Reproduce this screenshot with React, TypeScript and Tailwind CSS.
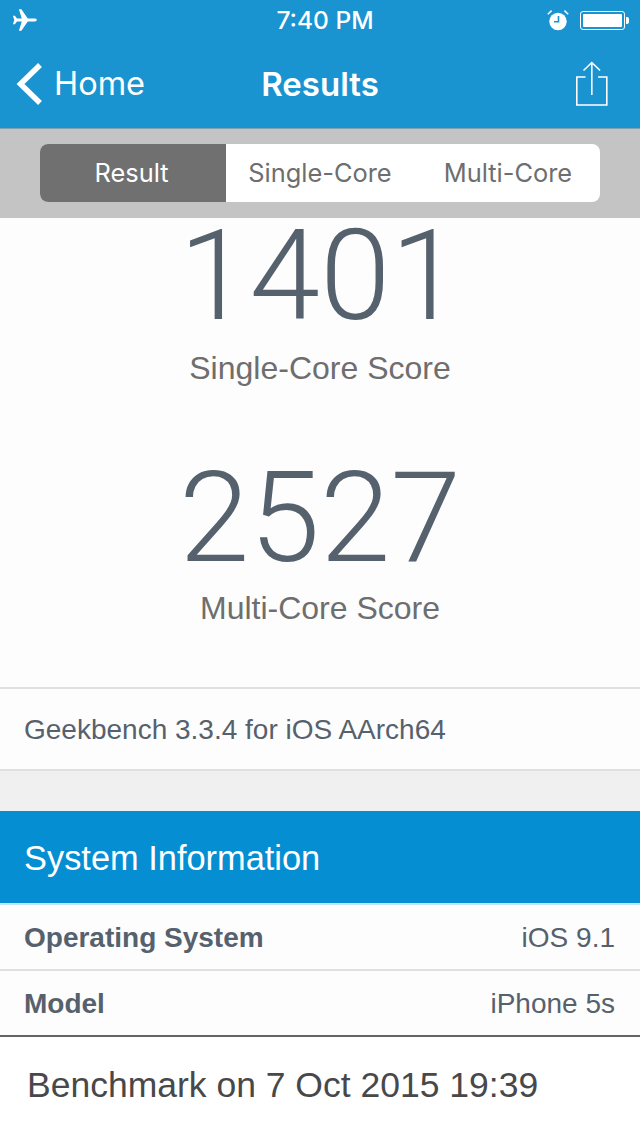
function AirplaneIcon() {
  return (
    <svg width="26" height="24" viewBox="0 0 26 24" fill="white">
      <path d="M24.8 11.8c0-.9-1.2-1.4-2.6-1.4h-6.4L9.4 1.2H6.9l2.9 9.2H5L2.9 7.8H.9L2.3 12 .9 16.2h2L5 13.6h4.8L6.9 22.8h2.5l6.4-9.2h6.4c1.4 0 2.6-.9 2.6-1.8z" />
    </svg>
  );
}

function AlarmIcon() {
  return (
    <svg width="22" height="22" viewBox="0 0 22 22">
      <circle cx="11" cy="12.5" r="8.7" fill="white" />
      <path d="M11.5 7v5.8H7" fill="none" stroke="#1a93d1" strokeWidth="1.6" />
      <path d="M.8 5.2 4.6 1.6M21.2 5.2 17.4 1.6" fill="none" stroke="white" strokeWidth="1.5" />
    </svg>
  );
}

function BatteryIcon() {
  return (
    <div className="flex items-center">
      <div className="w-[45px] h-[19px] rounded-[3px] border border-white p-[2px]">
        <div className="w-full h-full bg-white rounded-[1px]" />
      </div>
      <div className="w-[3px] h-[7px] ml-[1px] bg-white rounded-r-[2px]" />
    </div>
  );
}

function ShareIcon() {
  return (
    <svg width="34" height="46" viewBox="0 0 34 46" fill="none" stroke="white" strokeWidth="1.6">
      <path d="M10.5 16H1.8v28h30V16h-8.7" />
      <path d="M16.8 34V2M8.5 9.5l8.3-8 8.3 8" />
    </svg>
  );
}

function InfoRow({ label, value, last }: { label: string; value: string; last?: boolean }) {
  return (
    <div
      className={`h-[66px] flex items-center justify-between pl-6 pr-[25px] pt-[2px] bg-[#fdfdfd] border-b-2 text-[28px] text-[#56616e] shrink-0 ${
        last ? "border-[#646464]" : "border-[#e0e0e0]"
      }`}
    >
      <span className="font-bold">{label}</span>
      <span>{value}</span>
    </div>
  );
}

const scoreClass =
  "font-['Roboto',sans-serif] font-light text-[127px] leading-[120px] text-[#56616e]";
const scoreLabelClass = "text-[32px] leading-[40px] text-[#6e6e6e]";

export default function App() {
  return (
    <div className="w-[640px] h-[1136px] overflow-hidden bg-white font-['Liberation_Sans',sans-serif] flex flex-col">
      <div className="h-[129px] bg-[#1a93d1] border-b border-[#7f9fb2] text-white font-['Inter',sans-serif] shrink-0">
        <div className="h-10 flex items-center justify-between pl-3 pr-[11px] relative">
          <AirplaneIcon />
          <span className="absolute left-[10px] right-0 text-center text-[24.5px] font-medium">7:40 PM</span>
          <div className="flex items-center gap-[11px]">
            <AlarmIcon />
            <BatteryIcon />
          </div>
        </div>
        <div className="h-[88px] flex items-center justify-between pl-4 pr-[31px] relative">
          <div className="flex items-center gap-[12px]">
            <svg width="26" height="44" viewBox="0 0 26 44" fill="none" stroke="white" strokeWidth="5.5">
              <path d="M24 3 4.5 22 24 41" />
            </svg>
            <span className="text-[32.5px] mt-[1px]">Home</span>
          </div>
          <span className="absolute left-0 right-0 text-center text-[33px] font-semibold pt-[2px]">Results</span>
          <ShareIcon />
        </div>
      </div>

      <div className="h-[89px] bg-[#c4c4c4] flex justify-center pt-[15px] font-['Inter',sans-serif] shrink-0">
        <div className="w-[560px] h-[58px] flex rounded-[8px] overflow-hidden bg-white text-[25.4px] text-[#6e6e6e]">
          <div className="w-[186px] bg-[#707070] text-white flex items-center justify-center pr-[3px]">Result</div>
          <div className="w-[188px] flex items-center justify-center">Single-Core</div>
          <div className="w-[186px] flex items-center justify-center pl-[2px]">Multi-Core</div>
        </div>
      </div>

      <div className="h-[471px] bg-[#fdfdfd] flex flex-col items-center border-b-2 border-[#e0e0e0] shrink-0">
        <div className={`mt-[-2px] ${scoreClass}`}>1401</div>
        <div className={`mt-[12px] ${scoreLabelClass}`}>Single-Core Score</div>
        <div className={`mt-[70px] ${scoreClass}`}>2527</div>
        <div className={`mt-[10px] ${scoreLabelClass}`}>Multi-Core Score</div>
      </div>

      <div className="h-[82px] bg-[#fdfdfd] flex items-center pl-6 pt-[2px] border-b-2 border-[#e0e0e0] text-[28px] text-[#56616e] shrink-0">
        Geekbench 3.3.4 for iOS AArch64
      </div>
      <div className="h-[40px] bg-[#f0f0f0] shrink-0" />
      <div className="h-[94px] bg-[#058ed2] border-b-2 border-[#c5e4f3] flex items-center pl-6 pt-[3px] text-[34.4px] text-white shrink-0">
        System Information
      </div>
      <InfoRow label="Operating System" value="iOS 9.1" />
      <InfoRow label="Model" value="iPhone 5s" last />
      <div className="flex-1 bg-white pl-[27px] pt-[22px] text-[35.5px] text-[#48484a]">
        Benchmark on 7 Oct 2015 19:39
      </div>
    </div>
  );
}
